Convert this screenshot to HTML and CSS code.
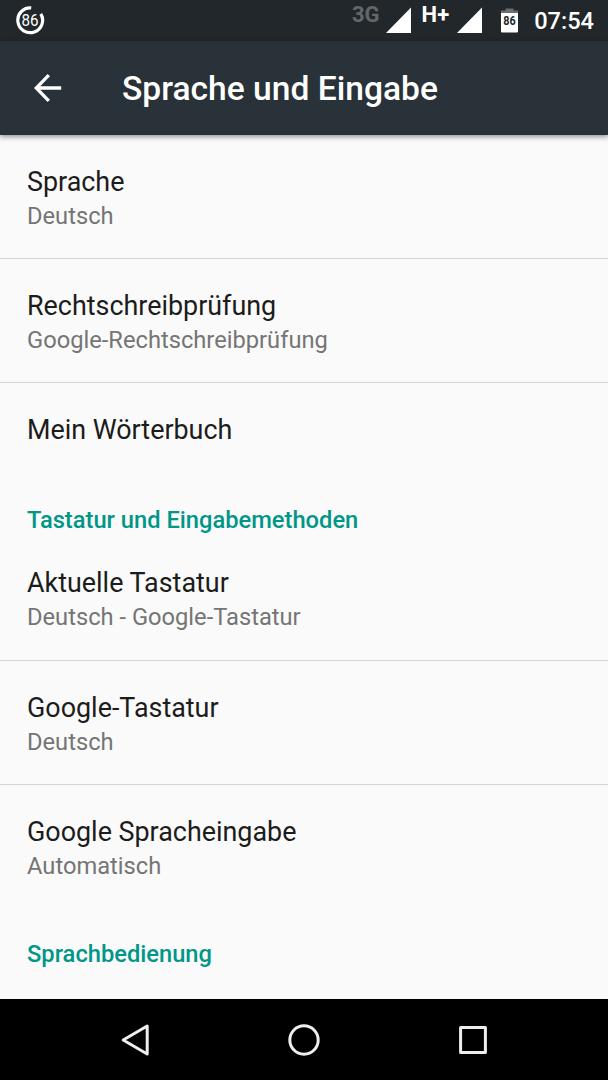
FILE: index.html
```html
<!DOCTYPE html>
<html lang="de">
<head>
    <meta charset="UTF-8">
    <meta name="viewport" content="width=device-width, initial-scale=1.0">
    <title>Sprache und Eingabe</title>
    <link rel="stylesheet" href="styles.css">
</head>
<body>
    <div class="statusbar">
        <svg class="battery-ring" width="30" height="30" viewBox="0 0 30 30">
            <path d="M16.2 2.9 A12.4 12.4 0 1 0 25.8 8.8" fill="none" stroke="#fff" stroke-width="3.2"/>
            <text class="ring-text" x="15" y="21.3" text-anchor="middle" textLength="17" lengthAdjust="spacingAndGlyphs">86</text>
        </svg>
        <div class="status-right">
            <span class="network network-off">3G</span>
            <svg class="signal" width="26" height="26" viewBox="0 0 26 26"><path d="M25 0.5V26H0z" fill="#fff"/></svg>
            <span class="network network-on">H+</span>
            <svg class="signal" width="26" height="26" viewBox="0 0 26 26"><path d="M25 0.5V26H0z" fill="#fff"/></svg>
            <svg class="battery" width="17" height="25" viewBox="0 0 17 25">
                <path d="M4.5 0.5h8v2H17v3H0v-3h4.5z" fill="#6b6f71"/>
                <path d="M0 5h17v18.5a1 1 0 0 1-1 1H1a1 1 0 0 1-1-1z" fill="#fff"/>
                <text class="battery-text" x="8.5" y="17" text-anchor="middle" textLength="12.4" lengthAdjust="spacingAndGlyphs">86</text>
            </svg>
            <span class="clock">07:54</span>
        </div>
    </div>
    <header class="toolbar">
        <svg class="back" width="28" height="28" viewBox="0 0 28 28">
            <path d="M27.2 14H2.5M14.8 1.2L2.2 14L14.8 26.8" fill="none" stroke="#fff" stroke-width="3.3"/>
        </svg>
        <h1>Sprache und Eingabe</h1>
    </header>
    <main class="settings">
        <div class="item divider">
            <div class="title">Sprache</div>
            <div class="summary">Deutsch</div>
        </div>
        <div class="item divider">
            <div class="title">Rechtschreibprüfung</div>
            <div class="summary">Google-Rechtschreibprüfung</div>
        </div>
        <div class="item single">
            <div class="title">Mein Wörterbuch</div>
        </div>
        <h2>Tastatur und Eingabemethoden</h2>
        <div class="item divider">
            <div class="title">Aktuelle Tastatur</div>
            <div class="summary">Deutsch - Google-Tastatur</div>
        </div>
        <div class="item divider">
            <div class="title">Google-Tastatur</div>
            <div class="summary">Deutsch</div>
        </div>
        <div class="item last">
            <div class="title">Google Spracheingabe</div>
            <div class="summary">Automatisch</div>
        </div>
        <h2>Sprachbedienung</h2>
    </main>
    <nav class="navbar">
        <svg width="34" height="34" viewBox="0 0 34 34"><path d="M29.2 3V31L5.2 17z"/></svg>
        <svg width="34" height="34" viewBox="0 0 34 34"><circle cx="17" cy="17" r="14.2"/></svg>
        <svg width="34" height="34" viewBox="0 0 34 34"><rect x="4.6" y="4.6" width="24.8" height="24.8"/></svg>
    </nav>
</body>
</html>
```

FILE: styles.css
```css
* {
    box-sizing: border-box;
}
body {
    margin: 0;
    height: 1080px;
    display: flex;
    flex-direction: column;
    overflow: hidden;
    font-family: Roboto, "Noto Sans", sans-serif;
    background-color: #fafafa;
}
.statusbar {
    height: 41px;
    flex: none;
    display: flex;
    justify-content: space-between;
    padding: 0 14px 0 15px;
    background-color: #21272b;
    color: #fff;
}
.battery-ring {
    margin-top: 5px;
}
.ring-text {
    font-size: 17px;
    fill: #fff;
}
.status-right {
    display: flex;
    align-items: flex-start;
}
.network {
    font-size: 22px;
    line-height: 26px;
    font-weight: 700;
    margin-top: 2px;
}
.network-off {
    color: #636769;
    margin-right: 6px;
}
.network-on {
    margin: 2px 8px 0 10px;
}
.signal {
    margin-top: 7px;
}
.battery {
    margin: 8px 16px 0 18px;
}
.battery-text {
    font-size: 12.5px;
    font-weight: 700;
    fill: #21272b;
}
.clock {
    font-size: 23.6px;
    font-weight: 500;
    line-height: 28px;
    margin-top: 7px;
}
.toolbar {
    height: 94px;
    flex: none;
    display: flex;
    align-items: center;
    padding-left: 34px;
    background-color: #283238;
    color: #fff;
    box-shadow: 0 2px 5px rgba(0, 0, 0, 0.4);
    z-index: 1;
}
h1 {
    margin: 2px 0 0 60px;
    font-size: 33.6px;
    font-weight: 500;
    line-height: 40px;
}
.settings {
    flex: 1;
    overflow: hidden;
}
.item {
    height: 124.2px;
    padding: 31px 27px 0;
}
.divider {
    border-bottom: 1px solid #d4d4d4;
}
.single {
    height: 94px;
}
.last {
    height: 126px;
}
.title {
    font-size: 26.9px;
    line-height: 32px;
    color: #1c1c1c;
}
.summary {
    margin-top: 4px;
    font-size: 23.7px;
    line-height: 28px;
    color: #757575;
}
h2 {
    margin: 0;
    height: 59px;
    padding: 29px 27px 0;
    font-size: 23.7px;
    font-weight: 500;
    line-height: 28px;
    color: #009688;
}
.navbar {
    height: 81px;
    flex: none;
    display: flex;
    justify-content: center;
    align-items: center;
    gap: 135px;
    background-color: #000;
}
.navbar svg {
    fill: none;
    stroke: #eee;
    stroke-width: 3;
    stroke-linejoin: round;
}
```
